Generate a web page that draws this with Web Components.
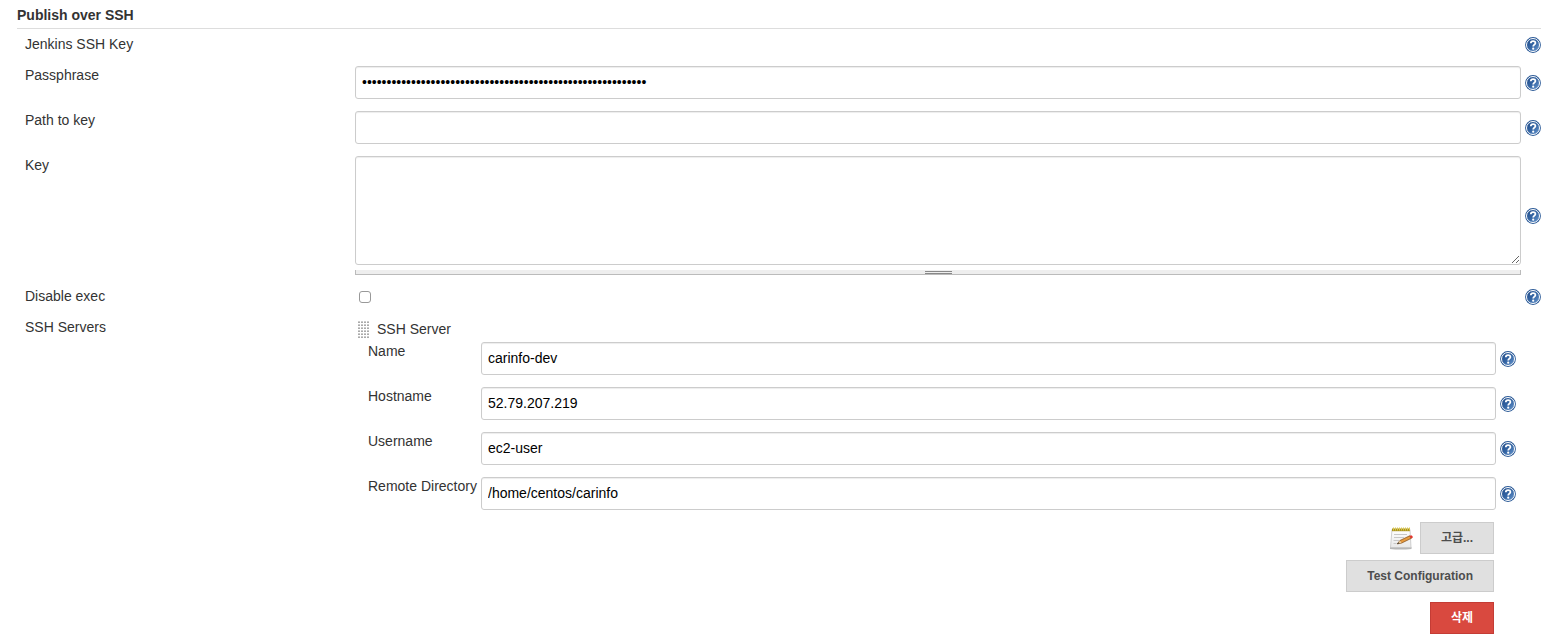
<!DOCTYPE html>
<html lang="ko">
<head>
<meta charset="utf-8">
<title>Publish over SSH</title>
<style>
    body {
        margin: 0;
        background: #fff;
        color: #333;
        font: 14px/19px "Liberation Sans", "Noto Sans CJK KR", sans-serif;
    }
</style>
</head>
<body>
<config-section heading="Publish over SSH">
    <config-row label="Jenkins SSH Key"></config-row>
    <config-row label="Passphrase" type="password" value="0123456789012345678901234567890123456789012345678901234567"></config-row>
    <config-row label="Path to key" type="text"></config-row>
    <config-row label="Key" type="textarea"></config-row>
    <config-row label="Disable exec" type="checkbox"></config-row>
    <config-row label="SSH Servers" nohelp>
        <server-item heading="SSH Server">
            <config-row nested label="Name" type="text" value="carinfo-dev"></config-row>
            <config-row nested label="Hostname" type="text" value="52.79.207.219"></config-row>
            <config-row nested label="Username" type="text" value="ec2-user"></config-row>
            <config-row nested label="Remote Directory" type="text" value="/home/centos/carinfo"></config-row>
            <note-icon slot="advanced"></note-icon>
            <config-button slot="advanced">고급...</config-button>
            <config-button slot="test">Test Configuration</config-button>
            <config-button slot="delete" danger>삭제</config-button>
        </server-item>
    </config-row>
</config-section>

<script>
class ConfigSection extends HTMLElement{
    constructor(){
        super();
        this.shadowDOM = this.attachShadow({mode: "open"});
    }

    connectedCallback(){
        this.shadowDOM.innerHTML = `
        <style>
            :host {
                display: block;
                padding: 6px 0 8px 17px;
            }

            h2 {
                margin: 0;
                padding-bottom: 3px;
                border-bottom: 1px solid #ddd;
                font-size: 14px;
                line-height: 19px;
            }

            .rows {
                display: flex;
                flex-direction: column;
                gap: 12px;
                padding: 6px 0 0 8px;
            }
        </style>
        <h2>${this.getAttribute("heading")}</h2>
        <div class="rows"><slot></slot></div>`;
    }
}

class HelpLink extends HTMLElement{
    constructor(){
        super();
        this.shadowDOM = this.attachShadow({mode: "open"});
    }

    connectedCallback(){
        this.shadowDOM.innerHTML = `
        <style>
            :host {
                display: block;
                width: 16px;
                height: 16px;
            }

            a, svg {
                display: block;
            }
        </style>
        <a href="#" aria-label="Help">
            <svg width="16" height="16" viewBox="0 0 16 16" fill="none">
                <defs>
                    <linearGradient id="fill" x1="0" y1="0" x2="1" y2="1">
                        <stop offset="0" stop-color="#1f4a87"/>
                        <stop offset=".5" stop-color="#3465a4"/>
                        <stop offset="1" stop-color="#6d9bd1"/>
                    </linearGradient>
                </defs>
                <circle cx="8" cy="8" r="7.9" fill="#2b5a97"/>
                <circle cx="8" cy="8" r="6.5" fill="url(#fill)" stroke="#fff" stroke-width="1"/>
                <path d="M5.8 6.2C5.8 3.4 10.4 3.4 10.4 6C10.4 7.6 8.2 7.7 8.2 9.5" stroke="#fff" stroke-width="1.8"/>
                <circle cx="8.2" cy="11.7" r="1.1" fill="#fff"/>
            </svg>
        </a>`;
    }
}

class NoteIcon extends HTMLElement{
    constructor(){
        super();
        this.shadowDOM = this.attachShadow({mode: "open"});
    }

    connectedCallback(){
        this.shadowDOM.innerHTML = `
        <style>
            :host {
                display: block;
                width: 24px;
                height: 24px;
            }

            svg {
                display: block;
            }
        </style>
        <svg width="24" height="24" viewBox="0 0 24 24">
            <defs>
                <linearGradient id="paper" x1="0" y1="0" x2="0" y2="1">
                    <stop offset="0" stop-color="#fff"/>
                    <stop offset="1" stop-color="#e8e8e8"/>
                </linearGradient>
            </defs>
            <path d="M1 21h21.5v2q-10.7 1.2-21.5 0z" fill="#999" opacity=".7"/>
            <path d="M3 3.5H21L22 21.5H1.5Z" fill="url(#paper)" stroke="#c4c4c4" stroke-width=".8"/>
            <path d="M3 2.5H21V5.2H3Z" fill="#a8921f"/>
            <path d="M4.500 1.500v3M6.500 1.500v3M8.500 1.500v3M10.500 1.500v3M12.500 1.500v3M14.500 1.500v3M16.500 1.500v3M18.500 1.500v3M20.500 1.500v3" stroke="#d9c650"/>
            <path d="M5 8.5h13M5 11.5h10M4.500 14.5h6M4.500 17.5h3" stroke="#c8c8c8"/>
            <path d="M8.2 17.9L11 14.5L20.7 9.8L22.3 12.3L12.7 17Z" fill="#e69a3e" stroke="#8a541d" stroke-width=".8"/>
            <path d="M8.5 17.7L11 14.7L12.5 16.8Z" fill="#ecd0a1"/>
            <path d="M7.8 18.1l2-1.8.8 1.2z" fill="#333"/>
            <path d="M20.4 9.9L22.2 9.2Q24.2 10.2 23.6 11.7L22.2 12.5Z" fill="#e2362e"/>
        </svg>`;
    }
}

class ConfigRow extends HTMLElement{
    constructor(){
        super();
        this.shadowDOM = this.attachShadow({mode: "open"});
    }

    connectedCallback(){
        this.render();
    }

    get control(){
        const type = this.getAttribute("type");
        const value = this.getAttribute("value") || "";
        if (type === "textarea") {
            return `<textarea id="control"></textarea><div class="resizer"><i></i></div>`;
        }
        if (type === "checkbox") {
            return `<input id="control" class="check" type="checkbox">`;
        }
        if (type) {
            return `<input id="control" class="text" type="${type}" value="${value}" autocomplete="off">`;
        }
        return `<slot></slot>`;
    }

    render(){
        const label = this.getAttribute("label");
        this.shadowDOM.innerHTML = `
        <style>
            :host {
                display: grid;
                grid-template-columns: 330px minmax(0, 1fr) 16px;
            }

            :host([nested]) {
                grid-template-columns: 113px minmax(0, 1fr) 16px;
            }

            .label {
                white-space: nowrap;
            }

            .field {
                margin-right: 4px;
            }

            help-link {
                align-self: center;
            }

            .text, textarea {
                display: block;
                box-sizing: border-box;
                width: 100%;
                margin: 0;
                padding: 5px 6px 7px;
                border: 1px solid #ccc;
                border-radius: 3px;
                box-shadow: inset 0 1px 1px rgba(0, 0, 0, 0.075);
                background: #fff;
                color: #000;
                font: inherit;
            }

            .text {
                height: 33px;
            }

            textarea {
                height: 109px;
            }

            .resizer {
                display: flex;
                justify-content: center;
                box-sizing: border-box;
                height: 5px;
                margin-top: 5px;
                border: 1px solid #bbb;
                border-top: 0;
                background: #eee;
            }

            .resizer i {
                box-sizing: border-box;
                width: 27px;
                height: 3px;
                margin-top: 1px;
                border: solid #888;
                border-width: 1px 0;
            }

            .check {
                display: block;
                appearance: none;
                box-sizing: border-box;
                width: 12px;
                height: 12px;
                margin: 4px 4px 3px;
                border: 1px solid #999;
                border-radius: 3px;
                background: #fff;
            }

            .check:checked {
                background: #3b82f6;
            }
        </style>
        ${this.hasAttribute("type") ? `<label class="label" for="control">${label}</label>` : `<div class="label">${label}</div>`}
        <div class="field">${this.control}</div>
        ${this.hasAttribute("nohelp") ? "" : `<help-link></help-link>`}`;
    }
}

class ConfigButton extends HTMLElement{
    constructor(){
        super();
        this.shadowDOM = this.attachShadow({mode: "open"});
    }

    connectedCallback(){
        this.shadowDOM.innerHTML = `
        <style>
            :host {
                display: block;
            }

            button {
                display: block;
                height: 32px;
                margin: 0;
                padding: 0 20px;
                border: 1px solid #ccc;
                background: #e0e0e0;
                color: #4d4d4d;
                font: bold 12px/18px "Liberation Sans", "Noto Sans CJK KR", sans-serif;
                cursor: pointer;
            }

            :host([danger]) button {
                border-color: #c43c35;
                background: #d9493f;
                color: #fff;
            }
        </style>
        <button type="button"><slot></slot></button>`;
    }
}

class ServerItem extends HTMLElement{
    constructor(){
        super();
        this.shadowDOM = this.attachShadow({mode: "open"});
    }

    connectedCallback(){
        this.shadowDOM.innerHTML = `
        <style>
            :host {
                display: block;
                padding: 2px 5px 0 3px;
            }

            .heading {
                display: flex;
                align-items: center;
                gap: 7px;
                padding-bottom: 3px;
            }

            .grip {
                width: 12px;
                height: 18px;
                background:
                    linear-gradient(90deg, transparent 2px, #fff 2px) 0 0 / 3px 3px,
                    linear-gradient(#ccc 1px, #aaa 1px, #aaa 2px, #fff 2px) 0 0 / 3px 3px;
                cursor: move;
            }

            .fields {
                display: flex;
                flex-direction: column;
                gap: 12px;
                padding-left: 10px;
            }

            .buttons {
                display: flex;
                flex-direction: column;
                align-items: flex-end;
                padding: 12px 22px 0 0;
            }

            .advanced {
                display: flex;
                align-items: center;
                gap: 7px;
                margin-bottom: 6px;
            }

            .test {
                margin-bottom: 10px;
            }
        </style>
        <div class="heading"><span class="grip"></span><span>${this.getAttribute("heading")}</span></div>
        <div class="fields"><slot></slot></div>
        <div class="buttons">
            <div class="advanced"><slot name="advanced"></slot></div>
            <div class="test"><slot name="test"></slot></div>
            <slot name="delete"></slot>
        </div>`;
    }
}

customElements.define("config-section", ConfigSection);
customElements.define("help-link", HelpLink);
customElements.define("note-icon", NoteIcon);
customElements.define("config-row", ConfigRow);
customElements.define("config-button", ConfigButton);
customElements.define("server-item", ServerItem);
</script>
</body>
</html>
